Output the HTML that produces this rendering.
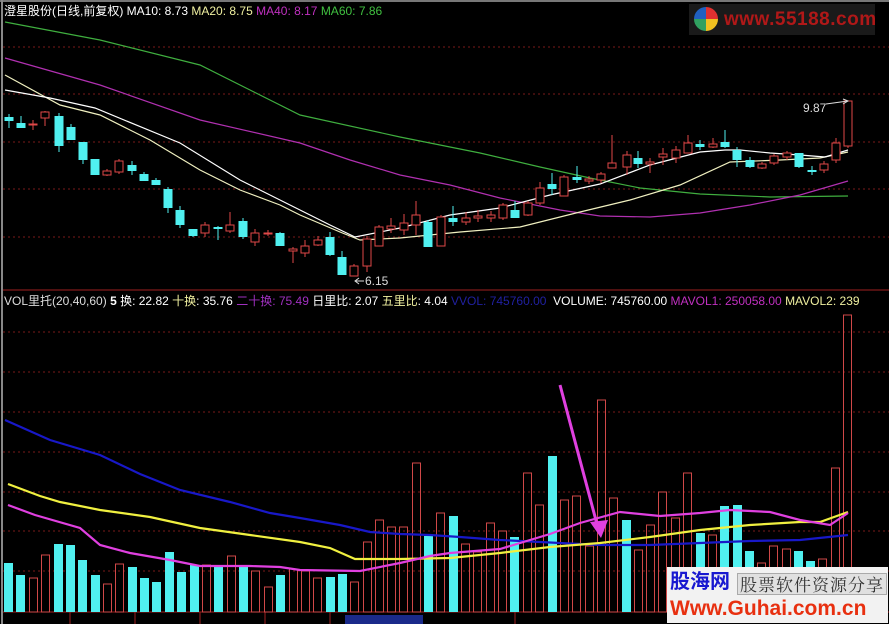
<!DOCTYPE html>
<html><head><meta charset="utf-8"><style>
html,body{margin:0;padding:0;background:#000;width:889px;height:624px;overflow:hidden}
body{position:relative;font-family:"Liberation Sans","Noto Sans CJK SC",sans-serif}
.lb{position:absolute;font-size:12px;white-space:nowrap;line-height:14px}
svg{position:absolute;left:0;top:0}
</style></head><body>
<svg id="s" width="889" height="624" xmlns="http://www.w3.org/2000/svg">
<rect x="0" y="0" width="889" height="2" fill="#777"/>
<rect x="1" y="0" width="2" height="624" fill="#888"/>
<line x1="3" y1="290" x2="889" y2="290" stroke="#a02020" stroke-width="1"/>
<line x1="3" y1="612" x2="889" y2="612" stroke="#a02020" stroke-width="1"/>
<g stroke="#7a1a1a" stroke-dasharray="2,3" stroke-width="1">
<line x1="3" y1="47" x2="889" y2="47"/><line x1="3" y1="94" x2="889" y2="94"/><line x1="3" y1="142" x2="889" y2="142"/><line x1="3" y1="189" x2="889" y2="189"/><line x1="3" y1="237" x2="889" y2="237"/>
<line x1="3" y1="332" x2="889" y2="332"/><line x1="3" y1="372" x2="889" y2="372"/><line x1="3" y1="412" x2="889" y2="412"/><line x1="3" y1="452" x2="889" y2="452"/><line x1="3" y1="492" x2="889" y2="492"/><line x1="3" y1="531" x2="889" y2="531"/><line x1="3" y1="571" x2="889" y2="571"/>
</g>
<g stroke="#a02020"><line x1="70" y1="612" x2="70" y2="624"/><line x1="135" y1="612" x2="135" y2="624"/><line x1="200" y1="612" x2="200" y2="624"/><line x1="265" y1="612" x2="265" y2="624"/><line x1="330" y1="612" x2="330" y2="624"/><line x1="515" y1="612" x2="515" y2="624"/></g>
<rect x="345" y="615" width="78" height="9" fill="#1a2a8a"/>
<g fill="none" stroke-width="1.2">
<polyline stroke="#3fae3f" points="5,22 100,40 200,65 300,115 400,137 480,153 540,167 590,178 640,188 700,194 770,197 848,196"/>
<polyline stroke="#b030b0" points="5,58 100,85 200,120 300,143 350,160 400,175 450,185 500,198 560,210 600,216 650,217 700,213 750,205 800,195 848,181"/>
<polyline stroke="#f0f0c0" points="5,75 60,105 100,115 150,140 200,170 240,190 280,205 300,215 340,232 360,240 400,238 460,232 520,227 580,212 630,200 680,185 730,162 780,160 820,158 848,152"/>
<polyline stroke="#ffffff" points="5,90 50,98 95,108 180,143 240,180 290,205 330,225 355,237 400,228 450,215 500,208 550,195 600,184 650,165 700,152 725,150 740,150 770,153 800,155 825,157 848,150"/>
</g>
<g id="candles"></g>
<g id="vols"></g>
<g fill="none" stroke-width="2.2">
<polyline stroke="#1818c8" points="5,420 50,440 100,455 140,474 180,490 230,502 270,513 300,518 340,525 370,532 400,534 430,535 460,537 500,540 540,542 600,545 650,545 700,543 750,541 800,540 848,535"/>
<polyline stroke="#f0f040" points="8,484 40,496 60,502 100,510 150,517 200,528 250,535 300,542 330,548 355,559 400,559 450,558 500,553 550,547 600,543 650,537 700,530 750,525 800,522 820,522 848,512"/>
<polyline stroke="#e040e0" points="8,505 35,515 80,528 100,545 130,553 170,560 200,566 250,566 280,567 300,570 360,571 400,563 430,556 450,553 500,549 550,534 580,523 620,512 660,516 700,513 730,510 770,512 800,520 830,525 848,513"/>
</g>
<line x1="560" y1="385" x2="598" y2="528" stroke="#e040e0" stroke-width="3"/>
<polygon points="590,522 608,520 601,538" fill="#e040e0"/>
<line x1="826" y1="104" x2="848" y2="101" stroke="#ddd"/>
<polyline points="843,99 848,101 843,104" fill="none" stroke="#ddd"/>
<line x1="355" y1="281" x2="364" y2="281" stroke="#ddd"/>
<polyline points="359,278 355,281 359,284" fill="none" stroke="#ddd"/>
</svg>
<div class="lb" style="left:4px;top:4px;color:#fff">澄星股份(日线,前复权) MA10: 8.73 <span style="color:#f0f0a0">MA20: 8.75</span> <span style="color:#c030c0">MA40: 8.17</span> <span style="color:#40c040">MA60: 7.86</span></div>
<div class="lb" style="left:4px;top:294px;color:#ddd">VOL里托(20,40,60) <b style="color:#fff">5</b> <span style="color:#fff">换: 22.82</span> <span style="color:#f0f0a0">十换</span><span style="color:#fff">: 35.76</span> <span style="color:#a030c0">二十换: 75.49</span> <span style="color:#fff">日里比: 2.07</span> <span style="color:#f0f0a0">五里比</span><span style="color:#fff">: 4.04</span> <span style="color:#2020a0">VVOL: 745760.00</span> &nbsp;<span style="color:#fff">VOLUME: 745760.00</span> <span style="color:#c030c0">MAVOL1: 250058.00</span> <span style="color:#f0f0a0">MAVOL2: 239</span></div>
<div class="lb" style="left:803px;top:101px;color:#ddd">9.87</div>
<div class="lb" style="left:365px;top:274px;color:#ddd">6.15</div>
<div style="position:absolute;left:689px;top:4px;width:186px;height:31px;background:#1a1a1a"></div>
<div style="position:absolute;left:694px;top:7px;width:24px;height:24px;border-radius:50%;background:conic-gradient(#e03030 0 25%,#f0c020 0 50%,#30a060 0 75%,#2060c0 0)"></div>
<div class="lb" style="left:724px;top:10px;color:#b01818;font-weight:bold;font-size:19px;line-height:20px;letter-spacing:0.5px">www.55188.com</div>
<div style="position:absolute;left:667px;top:567px;width:221px;height:56px;background:#f2f2f2"></div>
<div class="lb" style="left:670px;top:570px;color:#1818d0;font-weight:bold;font-size:20px;line-height:24px">股海网</div>
<div class="lb" style="left:737px;top:573px;color:#333;font-size:17px;line-height:20px;font-family:'Noto Serif CJK SC',serif;background:#e0e0e0;border:1px solid #aaa;padding:0 2px;letter-spacing:1px">股票软件资源分享</div>
<div class="lb" style="left:670px;top:597px;color:#e83010;font-weight:bold;font-size:21px;line-height:24px">Www.Guhai.com.cn</div>
<script>
var C=[[9,117,121,114,128,1],[21,123,128,116,128,1],[33,124,125,120,130,0],[45,112,118,111,126,0],[59,116,146,113,152,1],[71,127,140,124,140,1],[83,142,160,142,164,1],[95,159,175,159,175,1],[107,171,175,169,176,0],[119,161,172,159,174,0],[132,165,171,161,175,1],[144,174,181,172,181,1],[156,180,185,178,185,1],[168,189,208,187,213,1],[180,210,225,206,228,1],[193,229,236,229,237,1],[205,225,233,222,237,0],[218,227,229,226,240,1],[230,225,231,212,233,0],[243,221,237,218,239,1],[255,233,242,229,246,0],[268,233,234,230,236,0],[280,233,246,232,246,1],[293,249,251,247,263,0],[305,246,253,240,257,0],[318,240,245,236,246,0],[330,237,255,232,256,1],[342,257,275,251,275,1],[354,266,276,264,276,0],[367,239,266,236,272,0],[379,227,246,225,246,0],[391,226,229,218,233,0],[404,223,230,214,235,0],[416,215,225,201,235,0],[428,222,247,220,247,1],[441,217,246,215,246,0],[453,218,222,206,226,1],[466,218,222,212,225,0],[478,216,218,210,222,0],[491,215,218,211,222,0],[503,205,218,203,220,0],[515,210,218,201,218,1],[528,203,215,201,216,0],[540,188,203,182,205,0],[552,184,189,173,195,1],[564,177,196,175,196,0],[577,177,180,166,183,1],[589,179,181,176,184,0],[601,174,180,172,183,0],[612,163,168,135,168,0],[627,155,167,151,175,0],[638,158,164,151,168,1],[650,162,164,158,173,0],[663,154,157,148,165,0],[676,150,158,146,163,0],[688,143,153,135,153,0],[700,144,147,140,150,1],[713,144,147,138,148,0],[725,142,147,130,148,1],[737,150,160,147,167,1],[750,160,167,157,168,1],[762,164,168,162,169,0],[774,156,163,154,165,0],[787,153,157,151,160,0],[799,153,167,153,168,1],[812,170,172,166,175,1],[824,164,170,161,173,0],[836,143,160,138,163,0],[848,101,146,101,148,0]];
var h='';C.forEach(function(c){var col=c[5]?'#50f0f0':'#e04848';h+='<line x1="'+c[0]+'" y1="'+c[3]+'" x2="'+c[0]+'" y2="'+c[4]+'" stroke="'+col+'"/>';var ht=Math.max(c[2]-c[1],1);if(c[5])h+='<rect x="'+(c[0]-4.5)+'" y="'+c[1]+'" width="9" height="'+ht+'" fill="#50f0f0"/>';else h+='<rect x="'+(c[0]-4)+'" y="'+c[1]+'" width="8" height="'+ht+'" fill="#000" stroke="#e04848"/>';});
document.getElementById('candles').innerHTML=h;
var V=[[4,563,1],[16,575,1],[29,578,0],[41,555,0],[54,544,1],[66,545,1],[78,560,1],[91,575,1],[103,584,0],[115,564,0],[128,567,1],[140,578,1],[152,582,1],[165,552,1],[177,572,1],[190,565,1],[202,565,0],[214,566,1],[227,556,0],[239,566,1],[251,571,0],[264,587,0],[276,575,1],[289,569,0],[301,571,0],[313,578,0],[326,577,1],[338,574,1],[350,582,0],[363,542,0],[375,520,0],[387,527,0],[399,527,0],[412,463,0],[424,536,1],[436,513,0],[449,516,1],[461,544,0],[473,552,0],[486,523,0],[498,531,0],[510,537,1],[523,473,0],[535,505,0],[548,456,1],[560,500,0],[572,496,0],[585,546,0],[597,400,0],[609,498,0],[622,520,1],[634,550,0],[646,525,0],[658,492,0],[671,518,0],[683,473,0],[696,533,1],[708,535,0],[720,506,1],[733,505,1],[745,551,1],[757,563,0],[769,546,0],[782,549,0],[794,551,1],[806,561,1],[818,559,0],[831,468,0],[843,315,0]];
var g='';V.forEach(function(v){if(v[2])g+='<rect x="'+v[0]+'" y="'+v[1]+'" width="9" height="'+(612-v[1])+'" fill="#50f0f0"/>';else g+='<rect x="'+(v[0]+0.5)+'" y="'+v[1]+'" width="8" height="'+(612-v[1])+'" fill="none" stroke="#d04848"/>';});
document.getElementById('vols').innerHTML=g;
</script>
</body></html>
